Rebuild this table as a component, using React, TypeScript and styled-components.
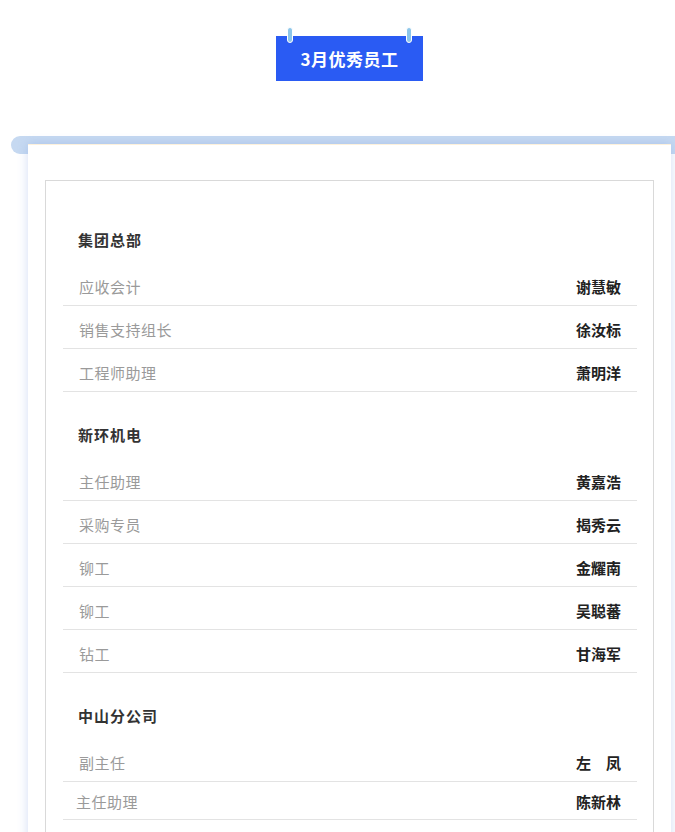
import styled, { createGlobalStyle } from "styled-components";

const GlobalStyle = createGlobalStyle`
  body {
    margin: 0;
    background: #fff;
    font-family: "Noto Sans CJK SC", "Noto Sans", sans-serif;
    overflow: hidden;
  }
`;

const Page = styled.div`
  width: 675px;
  height: 832px;
  overflow: hidden;
  background: #fff;
`;

const Header = styled.div`
  display: flex;
  justify-content: center;
  padding: 36px 0 0 24px;
`;

const Badge = styled.div`
  position: relative;
  width: 147px;
  height: 45px;
  background: #2a5bf3;
  color: #fff;
  display: flex;
  align-items: center;
  justify-content: center;
  font-size: 17px;
  font-weight: 700;
  letter-spacing: 0.5px;
`;

const Ring = styled.span<{ $side: "left" | "right" }>`
  position: absolute;
  top: -9px;
  ${(p) => (p.$side === "left" ? "left: 11px;" : "right: 11px;")}
  width: 4px;
  height: 14px;
  border-radius: 3px;
  background: #8dc6ea;
  border: 1px solid #fff;
`;

const Board = styled.div`
  margin-top: 55px;
  margin-left: 11px;
  display: flex;
  flex-direction: column;
`;

const Bar = styled.div`
  height: 18px;
  background: #c6d9f1;
  border-radius: 9px 0 0 9px;
`;

const Card = styled.div`
  margin-top: -10px;
  margin-left: 17px;
  width: 643px;
  background: #fff;
  border-top: 1px solid #fdf1dc;
  padding: 35px 17px 0;
  box-sizing: border-box;
  box-shadow: 0 0 10px rgba(95, 135, 220, 0.28);
`;

const Inner = styled.div`
  border: 1px solid #d9d9d9;
  padding: 16px 16px 40px 17px;
  min-height: 700px;
`;

const SectionTitle = styled.div`
  padding: 33px 0 0 15px;
  margin-bottom: 13px;
  font-size: 15px;
  line-height: 20px;
  font-weight: 700;
  color: #333;
  letter-spacing: 1px;
`;

const Row = styled.div<{ $tight?: boolean }>`
  display: flex;
  justify-content: space-between;
  align-items: center;
  padding: ${(p) => (p.$tight ? "10px 16px 7px 13px" : "14px 16px 8px 16px")};
  line-height: 20px;
  font-size: 15px;
  border-bottom: 1px solid #e3e3e3;
`;

const Role = styled.span`
  color: #9a9a9a;
  letter-spacing: 0.5px;
`;

const Name = styled.span`
  color: #222;
  font-weight: 700;
`;

type Entry = { role: string; name: string; tight?: boolean };

const sections: { title: string; rows: Entry[] }[] = [
  {
    title: "集团总部",
    rows: [
      { role: "应收会计", name: "谢慧敏" },
      { role: "销售支持组长", name: "徐汝标" },
      { role: "工程师助理", name: "萧明洋" },
    ],
  },
  {
    title: "新环机电",
    rows: [
      { role: "主任助理", name: "黄嘉浩" },
      { role: "采购专员", name: "揭秀云" },
      { role: "铆工", name: "金耀南" },
      { role: "铆工", name: "吴聪蕃" },
      { role: "钻工", name: "甘海军" },
    ],
  },
  {
    title: "中山分公司",
    rows: [
      { role: "副主任", name: "左　凤" },
      { role: "主任助理", name: "陈新林", tight: true },
      { role: "", name: "" },
    ],
  },
];

export default function App() {
  return (
    <Page>
      <GlobalStyle />
      <Header>
        <Badge>
          <Ring $side="left" />
          <Ring $side="right" />
          3月优秀员工
        </Badge>
      </Header>
      <Board>
        <Bar />
        <Card>
          <Inner>
            {sections.map((s) => (
              <div key={s.title}>
                <SectionTitle>{s.title}</SectionTitle>
                {s.rows.map((r, i) => (
                  <Row key={i} $tight={r.tight}>
                    <Role>{r.role}</Role>
                    <Name>{r.name}</Name>
                  </Row>
                ))}
              </div>
            ))}
          </Inner>
        </Card>
      </Board>
    </Page>
  );
}
